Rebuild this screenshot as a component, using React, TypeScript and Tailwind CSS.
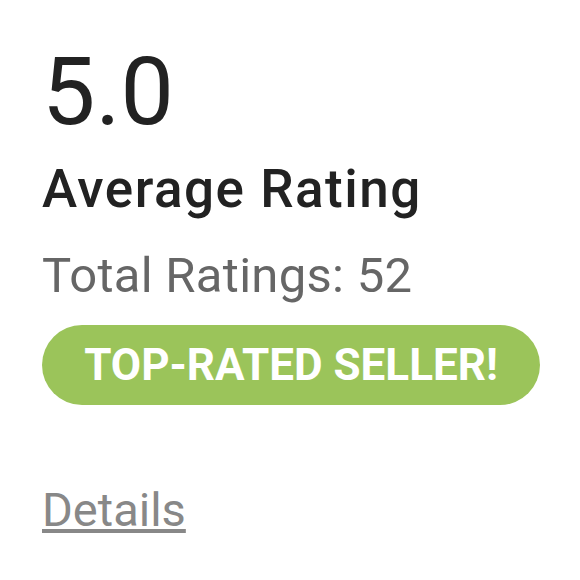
export default function App() {
  return (
    <div className="min-h-[580px] w-[580px] bg-white font-['Roboto',sans-serif]">
      <div className="flex flex-col items-start px-[42px] pt-[44px]">
        <div className="text-[95px] leading-none font-normal text-[#222222]">5.0</div>
        <div className="mt-[24px] text-[53px] leading-none font-medium tracking-[1.5px] text-[#222222]">
          Average Rating
        </div>
        <div className="mt-[35px] text-[49px] leading-none tracking-[0.3px] text-[#666666]">
          Total Ratings: 52
        </div>
        <div className="mt-[25px] flex h-[80px] w-[498px] items-center justify-center rounded-full bg-[#9bc45a]">
          <span className="text-[44px] leading-none font-bold text-white">TOP-RATED SELLER!</span>
        </div>
        <a href="#" className="mt-[81px] text-[47px] leading-none text-[#888888] underline">
          Details
        </a>
      </div>
    </div>
  );
}
